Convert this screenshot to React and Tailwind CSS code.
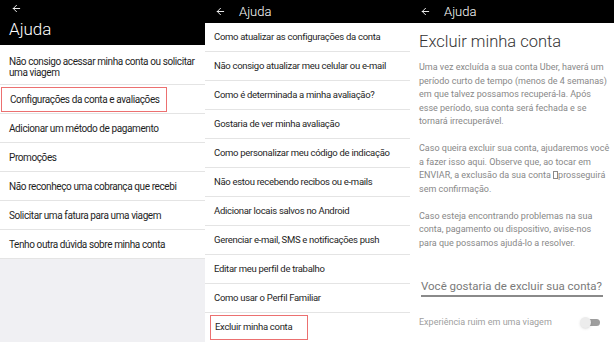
import { ArrowLeft } from 'lucide-react'

const FONT = { fontFamily: 'Roboto, "Noto Sans", sans-serif' }

const LIST1 = [
    { text: 'Não consigo acessar minha conta ou solicitar uma viagem', tall: true },
    { text: 'Configurações da conta e avaliações', boxed: true },
    { text: 'Adicionar um método de pagamento' },
    { text: 'Promoções' },
    { text: 'Não reconheço uma cobrança que recebi' },
    { text: 'Solicitar uma fatura para uma viagem' },
    { text: 'Tenho outra dúvida sobre minha conta' },
]

const LIST2 = [
    'Como atualizar as configurações da conta',
    'Não consigo atualizar meu celular ou e-mail',
    'Como é determinada a minha avaliação?',
    'Gostaria de ver minha avaliação',
    'Como personalizar meu código de indicação',
    'Não estou recebendo recibos ou e-mails',
    'Adicionar locais salvos no Android',
    'Gerenciar e-mail, SMS e notificações push',
    'Editar meu perfil de trabalho',
    'Como usar o Perfil Familiar',
]

const PARAS = [
    [
        'Uma vez excluída a sua conta Uber, haverá um',
        'período curto de tempo (menos de 4 semanas)',
        'em que talvez possamos recuperá-la. Após',
        'esse período, sua conta será fechada e se',
        'tornará irrecuperável.',
    ],
    [
        'Caso queira excluir sua conta, ajudaremos você',
        'a fazer isso aqui. Observe que, ao tocar em',
        null,
        'sem confirmação.',
    ],
    [
        'Caso esteja encontrando problemas na sua',
        'conta, pagamento ou dispositivo, avise-nos',
        'para que possamos ajudá-lo a resolver.',
    ],
]

function SmallHeader() {
    return (
        <div className="h-[23px] bg-black flex items-center text-white shrink-0">
            <ArrowLeft size={11} strokeWidth={2} className="ml-[10px]" />
            <span className="ml-[13px] text-[13px] font-light">Ajuda</span>
        </div>
    )
}

function Toggle() {
    return (
        <div className="relative w-[20px] h-[11px]">
            <div className="absolute left-[3px] right-0 top-[2px] h-[7px] rounded-full bg-[#9e9e9e]" />
            <div className="absolute left-0 top-0 w-[11px] h-[11px] rounded-full bg-[#ececec] shadow-sm" />
        </div>
    )
}

export default function App() {
    return (
        <div className="flex w-[614px] h-[342px] overflow-hidden bg-white text-[#1e1e1e]" style={FONT}>
            {/* painel 1 */}
            <div className="w-[205px] shrink-0 flex flex-col bg-[#f0f0f3]">
                <div className="h-[45px] bg-black text-white px-[9px] shrink-0">
                    <ArrowLeft size={11} strokeWidth={2} className="mt-[3px] ml-[2px]" />
                    <div className="text-[17px] font-light leading-none mt-[7px]">Ajuda</div>
                </div>
                <div className="bg-white">
                    {LIST1.map((it) => (
                        <div key={it.text} className={`border-b border-[#e4e4e4] flex items-center px-[9px] text-[10px] tracking-[-0.4px] whitespace-nowrap ${it.tall ? 'h-[40px] leading-[11px] pt-[4px]' : 'h-[29px]'}`}>
                            {it.boxed ? (
                                <div className="-ml-[8px] pl-[8px] w-[166px] h-[25px] flex items-center border border-[#ec7070]">{it.text}</div>
                            ) : it.tall ? (
                                <span>Não consigo acessar minha conta ou solicitar<br />uma viagem</span>
                            ) : <span>{it.text}</span>}
                        </div>
                    ))}
                </div>
            </div>

            {/* painel 2 */}
            <div className="w-[205px] shrink-0 flex flex-col bg-[#f0f0f3]">
                <SmallHeader />
                <div className="bg-white">
                    {LIST2.map((t) => (
                        <div key={t} className="h-[29px] border-b border-[#e4e4e4] flex items-center px-[9px] text-[9.5px] tracking-[-0.3px] whitespace-nowrap">{t}</div>
                    ))}
                    <div className="h-[29px] flex items-center px-[5px] text-[9.5px] tracking-[-0.3px]">
                        <div className="w-[98px] h-[25px] flex items-center pl-[4px] border border-[#ec7070]">Excluir minha conta</div>
                    </div>
                </div>
            </div>

            {/* painel 3 */}
            <div className="w-[204px] shrink-0 flex flex-col bg-white">
                <SmallHeader />
                <div className="px-[9px] pt-[9px]">
                    <h1 className="text-[16.5px] font-light text-[#333] leading-[20px]">Excluir minha conta</h1>
                    <div className="mt-[9px] text-[9px] leading-[13.5px] text-[#888] space-y-[13.5px] whitespace-nowrap">
                        {PARAS.map((lines, i) => (
                            <p key={i}>
                                {lines.map((l, j) => (
                                    <span key={j} className="block">
                                        {l ?? (
                                            <>ENVIAR, a exclusão da sua conta <span className="inline-block w-[5px] h-[8px] border border-[#8a8a8a] align-[-1px]" />prosseguirá</>
                                        )}
                                    </span>
                                ))}
                            </p>
                        ))}
                    </div>
                    <div className="mt-[28px] mx-[2px] border-b-2 border-[#8a8a8a] pb-[1px] text-[11.5px] text-[#7a7a7a] leading-[16px] whitespace-nowrap">Você gostaria de excluir sua conta?</div>
                    <div className="mt-[19px] flex items-center justify-between pr-[5px] text-[9px] text-[#a0a0a0]">
                        <span>Experiência ruim em uma viagem</span>
                        <Toggle />
                    </div>
                    <div className="mt-[13px] flex items-center justify-between pr-[5px] text-[9px] text-[#a0a0a0]">
                        <span>É muito caro</span>
                        <Toggle />
                    </div>
                </div>
            </div>
        </div>
    )
}
